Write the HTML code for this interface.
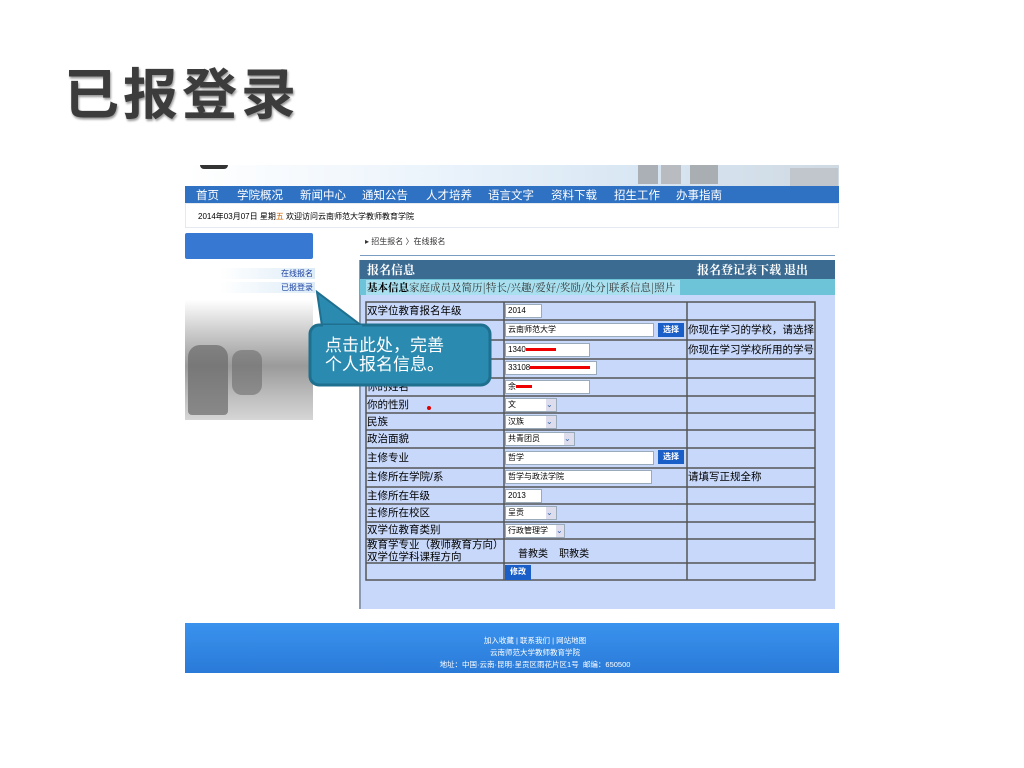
<!DOCTYPE html>
<html><head><meta charset="utf-8"><style>
*{margin:0;padding:0;box-sizing:border-box}
body{width:1024px;height:768px;background:#fff;position:relative;overflow:hidden;font-family:"Liberation Sans","Noto Sans CJK SC",sans-serif}
.a{position:absolute}
.t{font-size:11px;color:#000;white-space:nowrap}
.nav span{color:#fff;font-size:11.5px;position:absolute;top:1px}
.cell{position:absolute;font-size:10.5px;white-space:nowrap}
.inp{position:absolute;background:#fff;border:1px solid #9ab;height:14px;font-size:8px;line-height:12px;padding-left:2px}
.btn{position:absolute;background:#1a5ec8;color:#fff;font-size:8px;font-weight:bold;height:14px;line-height:14px;text-align:center}
</style></head><body>
<div class="a" style="left:64px;top:50px;font-size:55px;font-weight:bold;color:#3c3c3c;letter-spacing:4px;text-shadow:1px 2px 2px #999;font-family:'Noto Sans CJK SC',sans-serif">已报登录</div>

<!-- banner -->
<div class="a" style="left:185px;top:165px;width:654px;height:21px;background:linear-gradient(90deg,#fff 0%,#eaf3fb 40%,#d8e6f3 70%,#cfd9e2 100%)"></div>
<div class="a" style="left:200px;top:165px;width:28px;height:4px;background:#333;border-radius:0 0 14px 14px"></div>
<div class="a" style="left:638px;top:165px;width:20px;height:19px;background:#aab0b6"></div>
<div class="a" style="left:661px;top:165px;width:20px;height:19px;background:#b8bcc0"></div>
<div class="a" style="left:690px;top:165px;width:28px;height:19px;background:#a9aeb3"></div>
<div class="a" style="left:790px;top:168px;width:48px;height:18px;background:#c0c6cc"></div>
<!-- nav -->
<div class="a nav" style="left:185px;top:186px;width:654px;height:17px;background:#2f71c2">
<span style="left:11px">首页</span><span style="left:52px">学院概况</span><span style="left:115px">新闻中心</span><span style="left:177px">通知公告</span><span style="left:241px">人才培养</span><span style="left:303px">语言文字</span><span style="left:366px">资料下载</span><span style="left:429px">招生工作</span><span style="left:491px">办事指南</span>
</div>
<div class="a" style="left:185px;top:203px;width:654px;height:25px;background:#fff;border:1px solid #e4eaf0"></div>
<div class="a t" style="left:198px;top:211px;font-size:8px">2014年03月07日 星期<span style="color:#c60">五</span> 欢迎访问云南师范大学教师教育学院</div>

<!-- left -->
<div class="a" style="left:185px;top:233px;width:128px;height:26px;background:#3779d2;border-radius:2px"></div>
<div class="a" style="left:220px;top:268px;width:95px;height:11px;background:linear-gradient(90deg,#fff,#dcecf7)"></div>
<div class="a" style="left:220px;top:282px;width:95px;height:11px;background:linear-gradient(90deg,#fff,#dcecf7)"></div>
<div class="a t" style="left:281px;top:268px;font-size:8px;color:#1a3fa0">在线报名</div>
<div class="a t" style="left:281px;top:282px;font-size:8px;color:#1a3fa0">已报登录</div>
<div class="a" style="left:185px;top:300px;width:128px;height:120px;background:linear-gradient(180deg,#fff 0%,#cfcfcf 25%,#9a9a9a 55%,#bdbdbd 80%,#d6d6d6 100%)"></div>
<div class="a" style="left:188px;top:345px;width:40px;height:70px;background:#6a6a6a;border-radius:12px 12px 4px 4px;opacity:.7"></div>
<div class="a" style="left:232px;top:350px;width:30px;height:45px;background:#6c6c6c;border-radius:10px;opacity:.6"></div>

<!-- breadcrumb -->
<div class="a t" style="left:365px;top:236px;font-size:8px;color:#333">▸ 招生报名 〉在线报名</div>
<div class="a" style="left:360px;top:255px;width:475px;height:1px;background:#7a9cc0"></div>

<!-- main panel -->
<div class="a" style="left:359px;top:260px;width:476px;height:349px;background:#c8d8fa;border-left:2px solid #8a9ab0"></div>
<div class="a" style="left:360px;top:260px;width:475px;height:19px;background:#3c6b92"></div>
<div class="a" style="left:367px;top:261px;color:#fff;font-size:12px;font-weight:bold;font-family:'Noto Serif CJK SC',serif">报名信息</div>
<div class="a" style="left:697px;top:261px;color:#fff;font-size:12px;font-weight:bold;font-family:'Noto Serif CJK SC',serif;white-space:nowrap">报名登记表下载 退出</div>
<div class="a" style="left:360px;top:279px;width:475px;height:16px;background:#6dc3d8"></div>
<div class="a" style="left:366px;top:280px;width:314px;height:15px;background:#a8e0ef"></div>
<div class="a" style="left:367px;top:280px;font-size:10.5px;white-space:nowrap;font-family:'Noto Serif CJK SC',serif"><b>基本信息</b><span style="color:#333">家庭成员及简历|特长/兴趣/爱好/奖励/处分|联系信息|照片</span></div>

<!-- table -->
<svg class="a" style="left:0;top:0" width="1024" height="768">
<g stroke="#555" stroke-width="1.5" fill="none">
<rect x="366" y="302" width="449" height="278"/>
<line x1="504" y1="302" x2="504" y2="580"/><line x1="687" y1="302" x2="687" y2="580"/>
<line x1="366" y1="320" x2="815" y2="320"/><line x1="366" y1="340" x2="815" y2="340"/><line x1="366" y1="359" x2="815" y2="359"/><line x1="366" y1="378" x2="815" y2="378"/><line x1="366" y1="396" x2="815" y2="396"/><line x1="366" y1="413" x2="815" y2="413"/><line x1="366" y1="430" x2="815" y2="430"/><line x1="366" y1="448" x2="815" y2="448"/><line x1="366" y1="468" x2="815" y2="468"/><line x1="366" y1="487" x2="815" y2="487"/><line x1="366" y1="504" x2="815" y2="504"/><line x1="366" y1="522" x2="815" y2="522"/><line x1="366" y1="539" x2="815" y2="539"/><line x1="366" y1="563" x2="815" y2="563"/>
</g></svg>
<div class="cell" style="left:367px;top:303px">双学位教育报名年级</div>
<div class="cell" style="left:367px;top:379px">你的姓名</div>
<div class="cell" style="left:367px;top:397px">你的性别</div>
<div class="a" style="left:427px;top:406px;width:4px;height:4px;border-radius:2px;background:#d00"></div>
<div class="cell" style="left:367px;top:414px">民族</div>
<div class="cell" style="left:367px;top:431px">政治面貌</div>
<div class="cell" style="left:367px;top:450px">主修专业</div>
<div class="cell" style="left:367px;top:469px">主修所在学院/系</div>
<div class="cell" style="left:367px;top:488px">主修所在年级</div>
<div class="cell" style="left:367px;top:505px">主修所在校区</div>
<div class="cell" style="left:367px;top:522px">双学位教育类别</div>
<div class="cell" style="left:367px;top:539px;line-height:12px">教育学专业（教师教育方向）<br>双学位学科课程方向</div>
<div class="cell" style="left:688px;top:322px">你现在学习的学校，请选择</div>
<div class="cell" style="left:688px;top:342px">你现在学习学校所用的学号</div>
<div class="cell" style="left:688px;top:469px">请填写正规全称</div>

<div class="inp" style="left:505px;top:304px;width:37px">2014</div>
<div class="inp" style="left:505px;top:323px;width:149px">云南师范大学</div>
<div class="btn" style="left:658px;top:323px;width:26px">选择</div>
<div class="inp" style="left:505px;top:343px;width:85px">1340<span style="display:inline-block;width:30px;height:3px;background:#e00;vertical-align:middle"></span></div>
<div class="inp" style="left:505px;top:361px;width:92px">33108<span style="display:inline-block;width:60px;height:3px;background:#e00;vertical-align:middle"></span></div>
<div class="inp" style="left:505px;top:380px;width:85px">余<span style="display:inline-block;width:16px;height:3px;background:#e00;vertical-align:middle"></span></div>
<div class="inp" style="left:505px;top:398px;width:52px">文 <span style="float:right;background:#dde;color:#36a;width:10px">⌄</span></div>
<div class="inp" style="left:505px;top:415px;width:52px">汉族 <span style="float:right;background:#dde;color:#36a;width:10px">⌄</span></div>
<div class="inp" style="left:505px;top:432px;width:70px">共青团员 <span style="float:right;background:#dde;color:#36a;width:10px">⌄</span></div>
<div class="inp" style="left:505px;top:451px;width:149px">哲学</div>
<div class="btn" style="left:658px;top:450px;width:26px">选择</div>
<div class="inp" style="left:505px;top:470px;width:147px">哲学与政法学院</div>
<div class="inp" style="left:505px;top:489px;width:37px">2013</div>
<div class="inp" style="left:505px;top:506px;width:52px">呈贡 <span style="float:right;background:#dde;color:#36a;width:10px">⌄</span></div>
<div class="inp" style="left:505px;top:524px;width:60px">行政管理学 <span style="float:right;background:#dde;color:#36a;width:8px">⌄</span></div>
<div class="cell" style="left:518px;top:545px;font-size:10px">普教类 &nbsp; &nbsp;职教类</div>
<div class="btn" style="left:505px;top:565px;width:26px;height:15px">修改</div>

<!-- callout -->
<svg class="a" style="left:0;top:0" width="1024" height="768">
<path d="M322 326 L317 292 L362 326 Z" fill="#2a8ab0" stroke="#1f6f8f" stroke-width="2"/>
<rect x="310" y="325" width="180" height="60" rx="9" fill="#2a8ab0" stroke="#1f6f8f" stroke-width="3"/>
<path d="M323 327 L362 327" stroke="#2a8ab0" stroke-width="4"/>
</svg>
<div class="a" style="left:325px;top:336px;color:#fff;font-size:17px;line-height:19px;white-space:nowrap">点击此处，完善<br>个人报名信息。</div>

<!-- footer -->
<div class="a" style="left:185px;top:623px;width:654px;height:50px;background:linear-gradient(180deg,#3a93ee,#2a7ad8)"></div>
<div class="a" style="left:185px;top:635px;width:700px;text-align:center;color:#fff;font-size:7.5px;line-height:12px">加入收藏 | 联系我们 | 网站地图<br>云南师范大学教师教育学院<br>地址：中国·云南·昆明·呈贡区雨花片区1号 &nbsp;邮编：650500</div>
</body></html>
